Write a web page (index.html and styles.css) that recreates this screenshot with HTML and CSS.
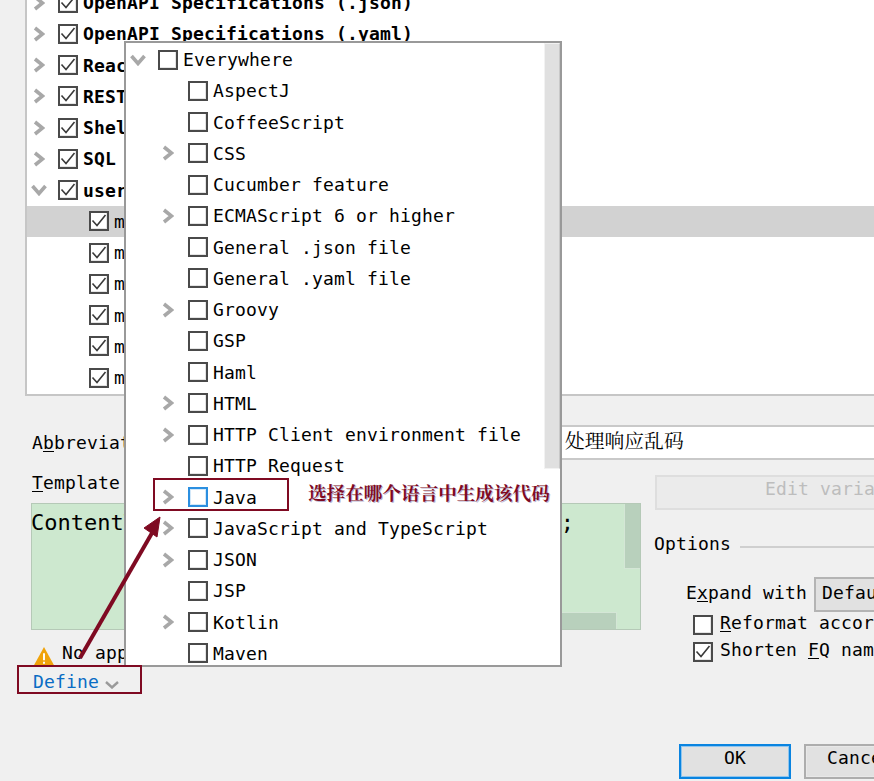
FILE: index.html
```html
<!DOCTYPE html>
<html lang="en">
<head>
<meta charset="utf-8">
<title>Live Template</title>
<link rel="stylesheet" href="styles.css">
</head>
<body>
<svg class="defs" width="0" height="0" aria-hidden="true">
  <symbol id="right" viewBox="0 0 12 16"><path d="M2 2 9.500 8 2 14" fill="none" stroke="#a8a8a8" stroke-width="3.600"/></symbol>
  <symbol id="down" viewBox="0 0 16 12"><path d="M1.500 2 8 9.500 14.500 2" fill="none" stroke="#a8a8a8" stroke-width="3.600"/></symbol>
  <symbol id="check" viewBox="0 0 16 16"><path d="M1.500 7.500 6 12.500 14.500 2" fill="none" stroke="#3a3a3a" stroke-width="1.600"/></symbol>
</svg>
<div class="dialog">
  <div class="sheet">
    <div class="tree">
      <div class="row"><svg class="chev"><use href="#right"/></svg><span class="cb"><svg><use href="#check"/></svg></span><b>OpenAPI Specifications (.json)</b></div>
      <div class="row"><svg class="chev"><use href="#right"/></svg><span class="cb"><svg><use href="#check"/></svg></span><b>OpenAPI Specifications (.yaml)</b></div>
      <div class="row"><svg class="chev"><use href="#right"/></svg><span class="cb"><svg><use href="#check"/></svg></span><b>React</b></div>
      <div class="row"><svg class="chev"><use href="#right"/></svg><span class="cb"><svg><use href="#check"/></svg></span><b>RESTful</b></div>
      <div class="row"><svg class="chev"><use href="#right"/></svg><span class="cb"><svg><use href="#check"/></svg></span><b>Shell</b></div>
      <div class="row"><svg class="chev"><use href="#right"/></svg><span class="cb"><svg><use href="#check"/></svg></span><b>SQL</b></div>
      <div class="row"><svg class="chev chev-down"><use href="#down"/></svg><span class="cb"><svg><use href="#check"/></svg></span><b>user</b></div>
      <div class="row child selected"><span class="cb"><svg><use href="#check"/></svg></span><span>main</span></div>
      <div class="row child"><span class="cb"><svg><use href="#check"/></svg></span><span>main</span></div>
      <div class="row child"><span class="cb"><svg><use href="#check"/></svg></span><span>main</span></div>
      <div class="row child"><span class="cb"><svg><use href="#check"/></svg></span><span>main</span></div>
      <div class="row child"><span class="cb"><svg><use href="#check"/></svg></span><span>main</span></div>
      <div class="row child"><span class="cb"><svg><use href="#check"/></svg></span><span>main</span></div>
    </div>

    <div class="abbrev">
      <span>A<u>b</u>breviation:</span>
      <div class="field">处理响应乱码</div>
    </div>

    <div class="body">
      <div class="left">
        <div class="label"><u>T</u>emplate text:</div>
        <div class="editor">
          <span class="code">ContentType type = ContentType.of("GBK");</span>
          <i class="sb-v"></i>
          <i class="sb-h"></i>
        </div>
        <div class="warn">
          <svg class="warn-icon" viewBox="0 0 22 20"><path d="M11 0 22 20H0Z" fill="#f0a30a"/><path d="M10 6.500h2V14h-2zM10 15.500h2v2h-2z" fill="#fff"/></svg>
          <span>No applicable contexts.</span>
        </div>
        <div class="define"><span>Define</span><svg viewBox="0 0 14 8"><path d="M1 1 7 6.500 13 1" fill="none" stroke="#9a9a9a" stroke-width="2.400"/></svg></div>
      </div>
      <div class="right">
        <div class="edit-btn">Edit variables</div>
        <div class="options"><span>Options</span><i></i></div>
        <div class="expand"><span class="expand-label">E<u>x</u>pand with</span><div class="select">Default (Tab)</div></div>
        <div class="opt"><span class="cb"></span><span><u>R</u>eformat according to style</span></div>
        <div class="opt"><span class="cb"><svg><use href="#check"/></svg></span><span>Shorten <u>F</u>Q names</span></div>
      </div>
    </div>

    <div class="footer">
      <div class="btn btn-ok">OK</div>
      <div class="btn">Cancel</div>
    </div>
  </div>

  <div class="popup">
    <div class="row top"><svg class="chev chev-down"><use href="#down"/></svg><span class="cb"></span><span>Everywhere</span></div>
    <div class="row sub"><span class="cb"></span><span>AspectJ</span></div>
    <div class="row sub"><span class="cb"></span><span>CoffeeScript</span></div>
    <div class="row sub"><svg class="chev"><use href="#right"/></svg><span class="cb"></span><span>CSS</span></div>
    <div class="row sub"><span class="cb"></span><span>Cucumber feature</span></div>
    <div class="row sub"><svg class="chev"><use href="#right"/></svg><span class="cb"></span><span>ECMAScript 6 or higher</span></div>
    <div class="row sub"><span class="cb"></span><span>General .json file</span></div>
    <div class="row sub"><span class="cb"></span><span>General .yaml file</span></div>
    <div class="row sub"><svg class="chev"><use href="#right"/></svg><span class="cb"></span><span>Groovy</span></div>
    <div class="row sub"><span class="cb"></span><span>GSP</span></div>
    <div class="row sub"><span class="cb"></span><span>Haml</span></div>
    <div class="row sub"><svg class="chev"><use href="#right"/></svg><span class="cb"></span><span>HTML</span></div>
    <div class="row sub"><svg class="chev"><use href="#right"/></svg><span class="cb"></span><span>HTTP Client environment file</span></div>
    <div class="row sub"><span class="cb"></span><span>HTTP Request</span></div>
    <div class="row sub"><svg class="chev"><use href="#right"/></svg><span class="cb cb-focus"></span><span>Java</span></div>
    <div class="row sub"><svg class="chev"><use href="#right"/></svg><span class="cb"></span><span>JavaScript and TypeScript</span></div>
    <div class="row sub"><svg class="chev"><use href="#right"/></svg><span class="cb"></span><span>JSON</span></div>
    <div class="row sub"><span class="cb"></span><span>JSP</span></div>
    <div class="row sub"><svg class="chev"><use href="#right"/></svg><span class="cb"></span><span>Kotlin</span></div>
    <div class="row sub"><span class="cb"></span><span>Maven</span></div>
    <i class="popup-sb"></i>
  </div>

  <div class="mark mark-java"></div>
  <div class="mark mark-define"></div>
  <div class="note">选择在哪个语言中生成该代码</div>
  <svg class="arrow" width="874" height="781" viewBox="0 0 874 781">
    <path d="M80 658 152 533" fill="none" stroke="#7f0a22" stroke-width="4"/>
    <path d="M160 517 144 528 157 537Z" fill="#7f0a22" stroke="#7f0a22" stroke-width="1"/>
  </svg>
</div>
</body>
</html>
```
FILE: styles.css
```css
* { box-sizing: border-box; }

html, body { margin: 0; padding: 0; }

body {
  background: #f0f0f0;
  color: #000;
  font-family: "DejaVu Sans Mono", monospace;
  font-size: 18px;
  letter-spacing: 0.16px;
}

.defs { position: absolute; }

u { text-underline-offset: 2px; }

.dialog {
  position: relative;
  width: 874px;
  height: 781px;
  overflow: hidden;
  background: #f0f0f0;
}

.sheet {
  width: 1000px;
  margin-top: -13px;
  padding-left: 25px;
}

.row {
  display: flex;
  align-items: center;
  height: 31.250px;
  white-space: nowrap;
}

.chev { flex: none; width: 12px; height: 16px; }
.chev-down { width: 16px; height: 12px; }

.cb {
  flex: none;
  display: inline-flex;
  align-items: center;
  justify-content: center;
  width: 20px;
  height: 20px;
  background: #fff;
  border: 2px solid #4a4a4a;
  box-shadow: inset -1px -1px 0 #e4e4e4;
}
.cb svg { width: 16px; height: 16px; }
.cb-focus { border-color: #2b8fe0; box-shadow: inset 0 0 0 1px #d3e8f9; }

/* tree behind the popup */
.tree {
  height: 409px;
  background: #fff;
  border-left: 2px solid #c6c6c6;
  border-bottom: 2px solid #c6c6c6;
}
.tree .row { padding-left: 6px; }
.tree .chev { margin-right: 13px; }
.tree .chev-down { margin-left: -2px; margin-right: 11px; }
.tree .cb { margin-right: 5px; }
.tree .child { padding-left: 62px; }
.tree .selected { background: #d2d2d2; }

/* abbreviation row */
.abbrev {
  display: flex;
  align-items: center;
  height: 35px;
  margin-top: 29px;
  padding-left: 7px;
}
.field {
  flex: none;
  display: flex;
  align-items: center;
  width: 600px;
  height: 35px;
  margin-left: 345px;
  padding: 0 0 6px 45px;
  background: #fff;
  border-top: 2px solid #c9c9c9;
  border-bottom: 2px solid #c9c9c9;
  font-family: "Noto Serif CJK SC", "Noto Sans CJK SC", serif;
  font-size: 19.800px;
  letter-spacing: 0;
}

/* main form */
.body {
  display: flex;
  gap: 13px;
  margin-top: 11px;
  margin-left: 6px;
}
.left { flex: none; width: 610px; }
.label { height: 24px; line-height: 24px; padding-left: 1px; }

.editor {
  position: relative;
  height: 127px;
  margin-top: 8px;
  padding: 2px 0 0 0;
  overflow: hidden;
  background: #cde8cf;
  border: 1px solid #b5c9b7;
  font-size: 22px;
  letter-spacing: 0;
  line-height: 34px;
  white-space: nowrap;
}
.code { margin-left: -1px; }
.sb-v {
  position: absolute;
  top: 0;
  right: 0;
  width: 16px;
  height: 65px;
  background: #b8d0bc;
  border-left: 1px solid #d4e6d6;
  border-bottom: 1px solid #d4e6d6;
}
.sb-h {
  position: absolute;
  left: 200px;
  bottom: 0;
  width: 385px;
  height: 17px;
  background: #b8d0bc;
  border-top: 1px solid #d4e6d6;
  border-right: 1px solid #d4e6d6;
}

.warn {
  display: flex;
  align-items: flex-start;
  gap: 7px;
  height: 24px;
  margin-top: 12px;
  padding-left: 2px;
  line-height: 22px;
  white-space: nowrap;
}
.warn-icon { flex: none; width: 22px; height: 19px; margin-top: 5px; }

.define {
  display: flex;
  align-items: center;
  gap: 6px;
  height: 24px;
  margin-top: 3px;
  padding-left: 2px;
  color: #0a6cc4;
}
.define svg { width: 14px; height: 8px; margin-top: 8px; }

.right { flex: none; width: 330px; padding-top: 4px; }

.edit-btn {
  height: 35px;
  margin-left: 1px;
  line-height: 24px;
  padding-left: 108px;
  background: #ebebeb;
  border: 2px solid #dedede;
  color: #bdbdbd;
}

.options {
  display: flex;
  align-items: center;
  gap: 9px;
  height: 24px;
  margin-top: 21px;
}
.options i { flex: 1; height: 2px; background: #cfcfcf; margin-top: 7px; }

.expand {
  display: flex;
  align-items: center;
  height: 35px;
  margin-top: 22px;
  padding-left: 32px;
  white-space: nowrap;
}
.expand-label { margin-top: -4px; }
.select {
  flex: none;
  width: 200px;
  height: 35px;
  line-height: 27px;
  margin-left: 7px;
  padding-left: 6px;
  background: #e1e1e1;
  border: 2px solid #b4b4b4;
}

.opt {
  display: flex;
  align-items: flex-start;
  gap: 7px;
  height: 27px;
  padding-left: 39px;
  line-height: 22px;
  white-space: nowrap;
}
.opt .cb { margin-top: 3px; }

.footer {
  display: flex;
  gap: 13px;
  margin-top: 51px;
  margin-left: 654px;
}
.btn {
  width: 112px;
  height: 35px;
  line-height: 24px;
  text-align: center;
  background: #e1e1e1;
  border: 2px solid #adadad;
  outline: 1px solid #e8e8e8;
  outline-offset: -3px;
}
.btn-ok { border: 3px solid #0a84e0; outline-color: #8fc5ee; line-height: 22px; }

/* context popup */
.popup {
  position: absolute;
  left: 124px;
  top: 41px;
  width: 438px;
  height: 626px;
  overflow: hidden;
  padding-top: 1px;
  background: #fff;
  border: 2px solid #999;
}
.popup .top { padding-left: 4px; }
.popup .top .chev { margin-right: 12px; }
.popup .top .cb { margin-right: 5px; }
.popup .sub { padding-left: 62px; }
.popup .sub .chev { margin-left: -26px; margin-right: 14px; }
.popup .sub .cb { margin-right: 5px; }
.popup-sb {
  position: absolute;
  top: 0;
  right: 0;
  width: 16px;
  height: 426px;
  background: #e0e0e0;
  border: 1px solid #f2f2f2;
  border-right-color: #c8c8c8;
}

/* annotations drawn over the screenshot */
.mark {
  position: absolute;
  border: 2px solid #7f0a22;
}
.mark-java { left: 153px; top: 478px; width: 136px; height: 33px; }
.mark-define { left: 17px; top: 665px; width: 125px; height: 29px; }

.note {
  position: absolute;
  left: 308px;
  top: 479px;
  color: #7f0a22;
  font-family: "Noto Serif CJK SC", "Noto Sans CJK SC", serif;
  font-size: 18.600px;
  font-weight: 700;
  letter-spacing: 0;
  line-height: 26px;
  white-space: nowrap;
  text-shadow: 1px 1px 0 #b9b9d6;
}

.arrow {
  position: absolute;
  left: 0;
  top: 0;
  pointer-events: none;
}
```
